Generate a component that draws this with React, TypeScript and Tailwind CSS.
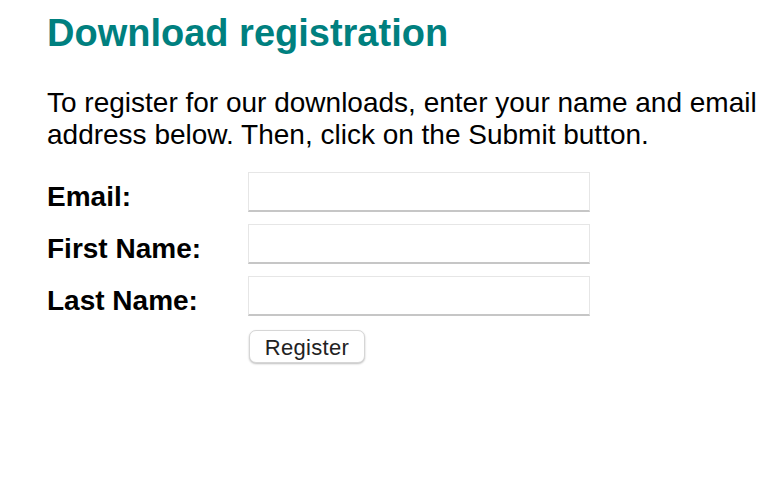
import React from "react";

export default function App() {
  const rows = ["Email:", "First Name:", "Last Name:"];
  return (
    <div className="min-h-[478px] w-[780px] bg-white pl-[47px] pt-[11px]" style={{ fontFamily: '"Liberation Sans", Arial, sans-serif' }}>
      <h1 className="text-[38px] font-bold leading-[44px] text-[#00807f]">Download registration</h1>
      <p className="mt-[32px] text-[28px] leading-[32px] text-black">
        To register for our downloads, enter your name and email<br />address below. Then, click on the Submit button.
      </p>
      <div className="mt-[21px] flex flex-col gap-[12px]">
        {rows.map((r) => (
          <div key={r} className="flex h-[40px] items-start">
            <label className="h-[40px] w-[201px] pt-[9px] text-[28px] font-bold leading-[32px] whitespace-nowrap text-black">{r}</label>
            <input type="text" className="h-[40px] w-[342px] border border-[#e6e6e6] border-b-2 border-b-[#c6c6c6] bg-white outline-none" />
          </div>
        ))}
        <div className="flex">
          <div className="w-[202px]" />
          <button className="mt-[2px] h-[33px] w-[116px] rounded-[7px] border border-[#d6d6d6] bg-white pt-[2px] text-[22px] leading-none tracking-[0.3px] text-[#222] shadow-[0_1px_2px_rgba(0,0,0,0.25)]">
            Register
          </button>
        </div>
      </div>
    </div>
  );
}
